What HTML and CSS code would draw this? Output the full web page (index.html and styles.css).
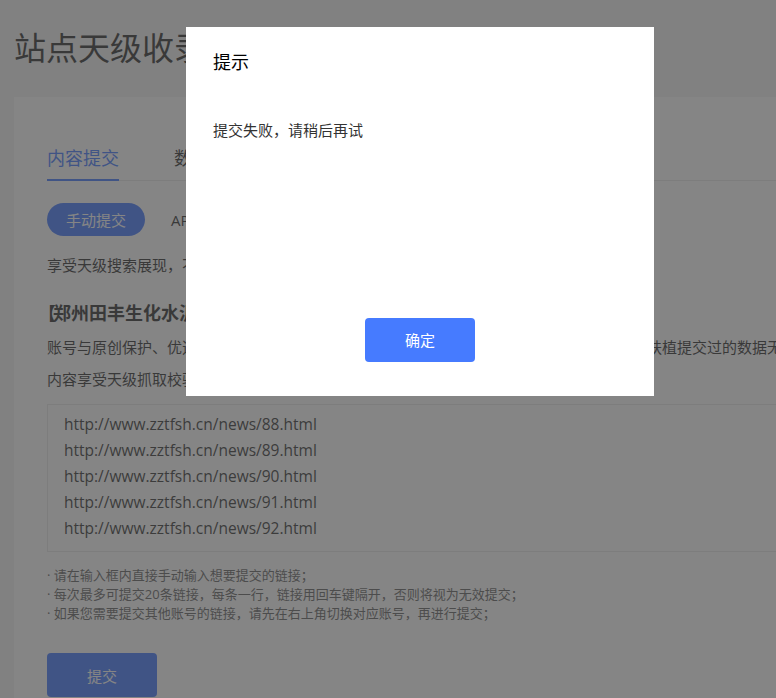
FILE: index.html
```html
<!DOCTYPE html>
<html lang="zh-CN">
<head>
    <meta charset="UTF-8">
    <meta name="viewport" content="width=device-width, initial-scale=1.0">
    <title>站点天级收录</title>
    <link rel="stylesheet" href="styles.css">
</head>
<body>
    <div class="page">
        <h1 class="page_title">站点天级收录提交</h1>
        <div class="card">
            <div class="tabs">
                <span class="tab active">内容提交</span>
                <span class="tab">数据提交</span>
            </div>
            <div class="modes">
                <button class="mode active">手动提交</button>
                <button class="mode">API提交</button>
            </div>
            <p class="intro">享受天级搜索展现，不限制提交数量</p>
            <h2 class="site_name"><span class="bracket">【</span>郑州田丰生化水泥添加剂有限公司】</h2>
            <p class="desc">账号与原创保护、优选内容权益已打通，通过本工具提交的内容链接，将获得平台流量重点扶植提交过的数据无需重复提交</p>
            <p class="desc">内容享受天级抓取校验</p>
            <textarea class="urls" readonly>http://www.zztfsh.cn/news/88.html
http://www.zztfsh.cn/news/89.html
http://www.zztfsh.cn/news/90.html
http://www.zztfsh.cn/news/91.html
http://www.zztfsh.cn/news/92.html</textarea>
            <ul class="tips">
                <li>· 请在输入框内直接手动输入想要提交的链接；</li>
                <li>· 每次最多可提交20条链接，每条一行，链接用回车键隔开，否则将视为无效提交；</li>
                <li>· 如果您需要提交其他账号的链接，请先在右上角切换对应账号，再进行提交；</li>
            </ul>
            <button class="submit">提交</button>
        </div>
    </div>

    <div class="mask"></div>
    <div class="dialog">
        <div class="dialog_title">提示</div>
        <div class="dialog_body">提交失败，请稍后再试</div>
        <div class="dialog_foot"><button class="ok">确定</button></div>
    </div>
</body>
</html>
```

FILE: styles.css
```css
html, body {
    margin: 0;
    height: 100%;
    overflow: hidden;
}
body {
    font-family: "Open Sans", "Noto Sans CJK SC", sans-serif;
    background-color: #f5f5f5;
    color: #333;
}
.page {
    padding: 0 14px;
    width: 900px;
}
.page_title {
    margin: 24px 0 25px 0;
    font-size: 32px;
    line-height: 48px;
    font-weight: normal;
    color: #333;
}
.card {
    background-color: #fff;
    padding: 49px 33px 40px 33px;
}
.tabs {
    display: flex;
    gap: 55px;
    border-bottom: 1px solid #e8e8e8;
}
.tab {
    font-size: 18px;
    line-height: 24px;
    padding-bottom: 9px;
    margin-bottom: -1px;
    color: #333;
}
.tab.active {
    color: #467bff;
    border-bottom: 2px solid #467bff;
}
.modes {
    display: flex;
    gap: 7px;
    margin-top: 22px;
}
.mode {
    border: none;
    border-radius: 17px;
    height: 33px;
    padding: 0 19px;
    font-family: inherit;
    font-size: 15px;
    background: none;
    color: #333;
}
.mode.active {
    background-color: #467bff;
    color: #fff;
}
.intro {
    margin: 18px 0 0 0;
    font-size: 15px;
    line-height: 22px;
}
.site_name {
    margin: 24px 0 0 -9px;
    font-size: 18px;
    line-height: 26px;
    font-weight: bold;
}
.bracket {
    margin-right: -3px;
}
.desc {
    margin: 10px 0 0 0;
    font-size: 15px;
    line-height: 22px;
    white-space: nowrap;
}
.urls {
    display: block;
    box-sizing: border-box;
    width: 100%;
    height: 148px;
    margin-top: 14px;
    padding: 6px 16px 12px 16px;
    border: 1px solid #eaeaea;
    font-family: inherit;
    font-size: 15.5px;
    line-height: 26px;
    color: #3a3a3a;
    resize: none;
    overflow: hidden;
    outline: none;
}
.tips {
    list-style: none;
    margin: 14px 0 0 0;
    padding: 0;
    font-size: 13px;
    line-height: 19px;
    color: #666;
}
.submit {
    margin-top: 30px;
    width: 110px;
    height: 44px;
    border: none;
    border-radius: 4px;
    background-color: #467bff;
    color: #fff;
    font-family: inherit;
    font-size: 15px;
}
.mask {
    position: fixed;
    inset: 0;
    background-color: rgba(62, 62, 62, 0.63);
}
.dialog {
    position: fixed;
    left: 186px;
    top: 27px;
    width: 468px;
    height: 369px;
    box-sizing: border-box;
    padding: 23px 27px 34px 27px;
    background-color: #fff;
    display: flex;
    flex-direction: column;
}
.dialog_title {
    font-size: 18px;
    line-height: 24px;
    color: #000;
}
.dialog_body {
    flex: 1;
    margin-top: 45px;
    font-size: 15px;
    line-height: 22px;
    color: #333;
}
.dialog_foot {
    display: flex;
    justify-content: center;
}
.ok {
    width: 110px;
    height: 44px;
    border: none;
    border-radius: 4px;
    background-color: #467bff;
    color: #fff;
    font-family: inherit;
    font-size: 15px;
    line-height: 40px;
}
```
